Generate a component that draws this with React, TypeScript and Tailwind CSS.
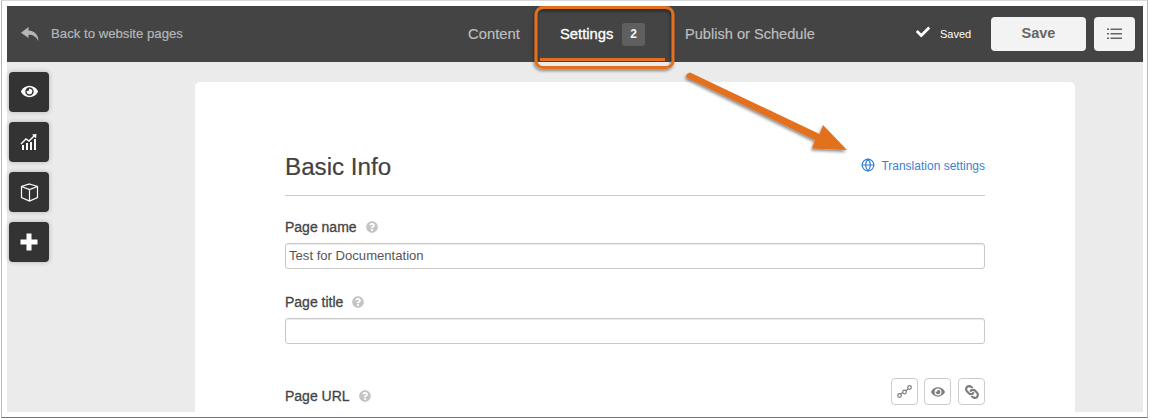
import React from "react";
import { FaEye, FaCheck, FaQuestionCircle, FaLink } from "react-icons/fa";
import { Globe } from "lucide-react";

const Help = () => <FaQuestionCircle className="text-[#c4c4c4] text-[12px]" />;

const Rail = ({ children }: { children: React.ReactNode }) => (
  <div className="w-10 h-10 rounded-[4px] bg-[#333333] flex items-center justify-center text-white shadow-[0_0_5px_rgba(0,0,0,0.25)]">
    {children}
  </div>
);

const Tool = ({ children, className }: { children: React.ReactNode; className: string }) => (
  <div className={`w-[27px] h-[27px] rounded-[4px] border border-[#cccccc] flex items-center justify-center text-[#7c7c7c] ${className}`}>
    {children}
  </div>
);

export default function App() {
  return (
    <div className="w-[1150px] h-[420px] bg-white overflow-hidden relative font-['Liberation_Sans',sans-serif]">
      <div className="ml-px w-[1147px] h-[418px] border border-t-[#d8d8d8] border-x-[#b8b8b8] border-b-[#777777] pt-[5px] pl-[5px] pr-[3px] bg-white">
        <div className="h-[406px] w-[1136px] bg-[#ebebeb] flex flex-col">
          <header className="h-14 shrink-0 bg-[#444444] flex items-center relative">
            <div className="flex items-center ml-[14px] text-[#b2b7bb] w-[447px]">
              <svg width="18" height="14" viewBox="0 0 18 14" fill="#b5b5b5" className="mr-[12px]">
                <path d="M7.5 0 L0 5.8 L7.5 11 V7.8 C11.5 7.6 15 9.5 17.5 14 C17.5 8.5 14 3.8 7.5 3.6 Z" />
              </svg>
              <span className="text-[13.2px] [-webkit-text-stroke:0.2px_#b2b7bb] whitespace-nowrap">Back to website pages</span>
            </div>
            <span className="mt-[1px] text-[14.8px] text-[#bdbdbd] [-webkit-text-stroke:0.2px_#bdbdbd] w-[53px] whitespace-nowrap">Content</span>
            <div className="flex items-center ml-[39px] w-[125px] text-white">
              <span className="mt-[1px] text-[14.8px] [-webkit-text-stroke:0.3px_#ffffff] whitespace-nowrap w-[54px]">Settings</span>
              <span className="ml-2 w-[23px] h-[23px] rounded-[3px] bg-[#5f5f5f] flex items-center justify-center text-[12px] font-bold text-[#f2f2f2]">2</span>
            </div>
            <span className="mt-[1px] text-[14.6px] text-[#bdbdbd] [-webkit-text-stroke:0.2px_#bdbdbd] whitespace-nowrap w-[130px]">Publish or Schedule</span>
            <div className="ml-auto flex items-center">
              <FaCheck className="text-[14px] text-white -mt-[4px]" />
              <span className="ml-[10px] text-[11px] text-white w-[31px]">Saved</span>
              <button className="ml-[20px] w-[95px] h-[34px] rounded-[4px] bg-[#f3f3f3] text-[#666666] text-[14.5px] font-bold -mt-[1px]">Save</button>
              <button className="ml-2 mr-2 w-[41px] h-[34px] rounded-[4px] bg-[#f3f3f3] flex items-center justify-center text-[#666666] -mt-[1px]">
                <svg width="15" height="12" viewBox="0 0 15 12" fill="currentColor">
                  <path d="M0 0.5 H2 V2 H0 Z M0 5 H2 V6.5 H0 Z M0 9.5 H2 V11 H0 Z M3.5 0.5 H15 V2 H3.5 Z M3.5 5 H15 V6.5 H3.5 Z M3.5 9.5 H15 V11 H3.5 Z" />
                </svg>
              </button>
            </div>
          </header>
          <div className="flex-1 min-h-0 flex">
            <aside className="w-[188px] shrink-0 pl-[2px] pt-[10px] flex flex-col gap-[10px]">
              <Rail><FaEye className="text-[17px] -mt-[2px]" /></Rail>
              <Rail>
                <svg width="18" height="18" viewBox="0 0 18 18" fill="none" stroke="currentColor">
                  <path d="M1 11 L6 6 L9 8 L15 2" strokeWidth="1.4" />
                  <path d="M12 1.5 L16.5 1 L16 5.5 Z" fill="currentColor" stroke="none" />
                  <path d="M3 12 V17 M7 10 V17 M11 9 V17 M15 6 V17" strokeWidth="2" />
                </svg>
              </Rail>
              <Rail>
                <svg width="19" height="19" viewBox="0 0 19 19" fill="none" stroke="currentColor" strokeWidth="1.2">
                  <path d="M9.5 1 L17.5 3.5 V14.5 L9.5 18 L1.5 14.5 V3.5 Z M1.5 3.5 L9.5 6.5 L17.5 3.5 M9.5 6.5 V18" />
                </svg>
              </Rail>
              <Rail>
                <svg width="18" height="18" viewBox="0 0 18 18" fill="currentColor">
                  <path d="M6.5 0.5 H11.5 V6.5 H17.5 V11.5 H11.5 V17.5 H6.5 V11.5 H0.5 V6.5 H6.5 Z" />
                </svg>
              </Rail>
            </aside>
            <main className="mt-[20px] w-[880px] h-[330px] bg-white rounded-t-[5px] px-[90px] text-[#444444]">
              <div className="h-[114px] pt-[71px] border-b border-[#cccccc]">
                <div className="flex items-center justify-between">
                  <h1 className="text-[24.2px] leading-[28px] text-[#424242] [-webkit-text-stroke:0.2px_#424242]">Basic Info</h1>
                  <a className="flex items-center text-[12px] text-[#3b7fd4] -mt-[2px]">
                    <Globe size={14} strokeWidth={2} className="mr-[6px] -mt-[3px] text-[#2f7fd6]" />
                    Translation settings
                  </a>
                </div>
              </div>
              <label className="mt-[22px] flex items-center gap-[9px] text-[14px] leading-[18px] h-[18px] text-[#444444] [-webkit-text-stroke:0.3px_#444444]">
                Page name <Help />
              </label>
              <div className="mt-[7px] h-[26px] rounded-[3px] border border-[#c8c8c8] shadow-[inset_0_1px_1px_rgba(0,0,0,0.08)] pl-[3px] flex items-center text-[13.1px] text-[#555555]">
                Test for Documentation
              </div>
              <label className="mt-[24px] flex items-center gap-[9px] text-[14px] leading-[18px] h-[18px] text-[#444444] [-webkit-text-stroke:0.3px_#444444]">
                Page title <Help />
              </label>
              <div className="mt-[7px] h-[26px] rounded-[3px] border border-[#c8c8c8] shadow-[inset_0_1px_1px_rgba(0,0,0,0.08)]" />
              <div className="mt-[34px] flex items-start justify-between">
                <label className="mt-[9px] flex items-center gap-[9px] text-[14px] leading-[18px] h-[18px] text-[#444444] [-webkit-text-stroke:0.3px_#444444]">
                  Page URL <Help />
                </label>
                <div className="flex gap-[6px]">
                  <Tool className="">
                    <svg width="17" height="17" viewBox="0 0 17 17" fill="none" stroke="currentColor" strokeWidth="1.2">
                      <circle cx="3.5" cy="12.5" r="1.8" />
                      <circle cx="8.5" cy="9" r="1.8" />
                      <circle cx="13.5" cy="4.5" r="1.8" />
                      <path d="M4.5 11 L6.8 9.6 M10 8 L12 5.8" />
                    </svg>
                  </Tool>
                  <Tool className=""><FaEye className="text-[14px]" /></Tool>
                  <Tool className="ml-[1px]"><FaLink className="text-[14px] rotate-90" /></Tool>
                </div>
              </div>
            </main>
          </div>
        </div>
      </div>
      <svg className="absolute left-0 top-0 pointer-events-none" width="1150" height="420" viewBox="0 0 1150 420" fill="none">
        <defs>
          <filter id="s" x="-20%" y="-20%" width="140%" height="140%">
            <feDropShadow dx="-1" dy="2" stdDeviation="1.5" floodColor="#000" floodOpacity="0.45" />
          </filter>
        </defs>
        <rect x="536" y="7.5" width="137" height="60" rx="7" stroke="#e36f1e" strokeWidth="3" filter="url(#s)" />
        <rect x="540" y="58" width="125" height="3" fill="#e36f1e" />
        <path d="M690 72.5 Q685 74 686.5 77.5 L815 140 L812 148.5 L847 150 L823 125 L819.5 134 Z" fill="#e36f1e" filter="url(#s)" />
      </svg>
    </div>
  );
}
